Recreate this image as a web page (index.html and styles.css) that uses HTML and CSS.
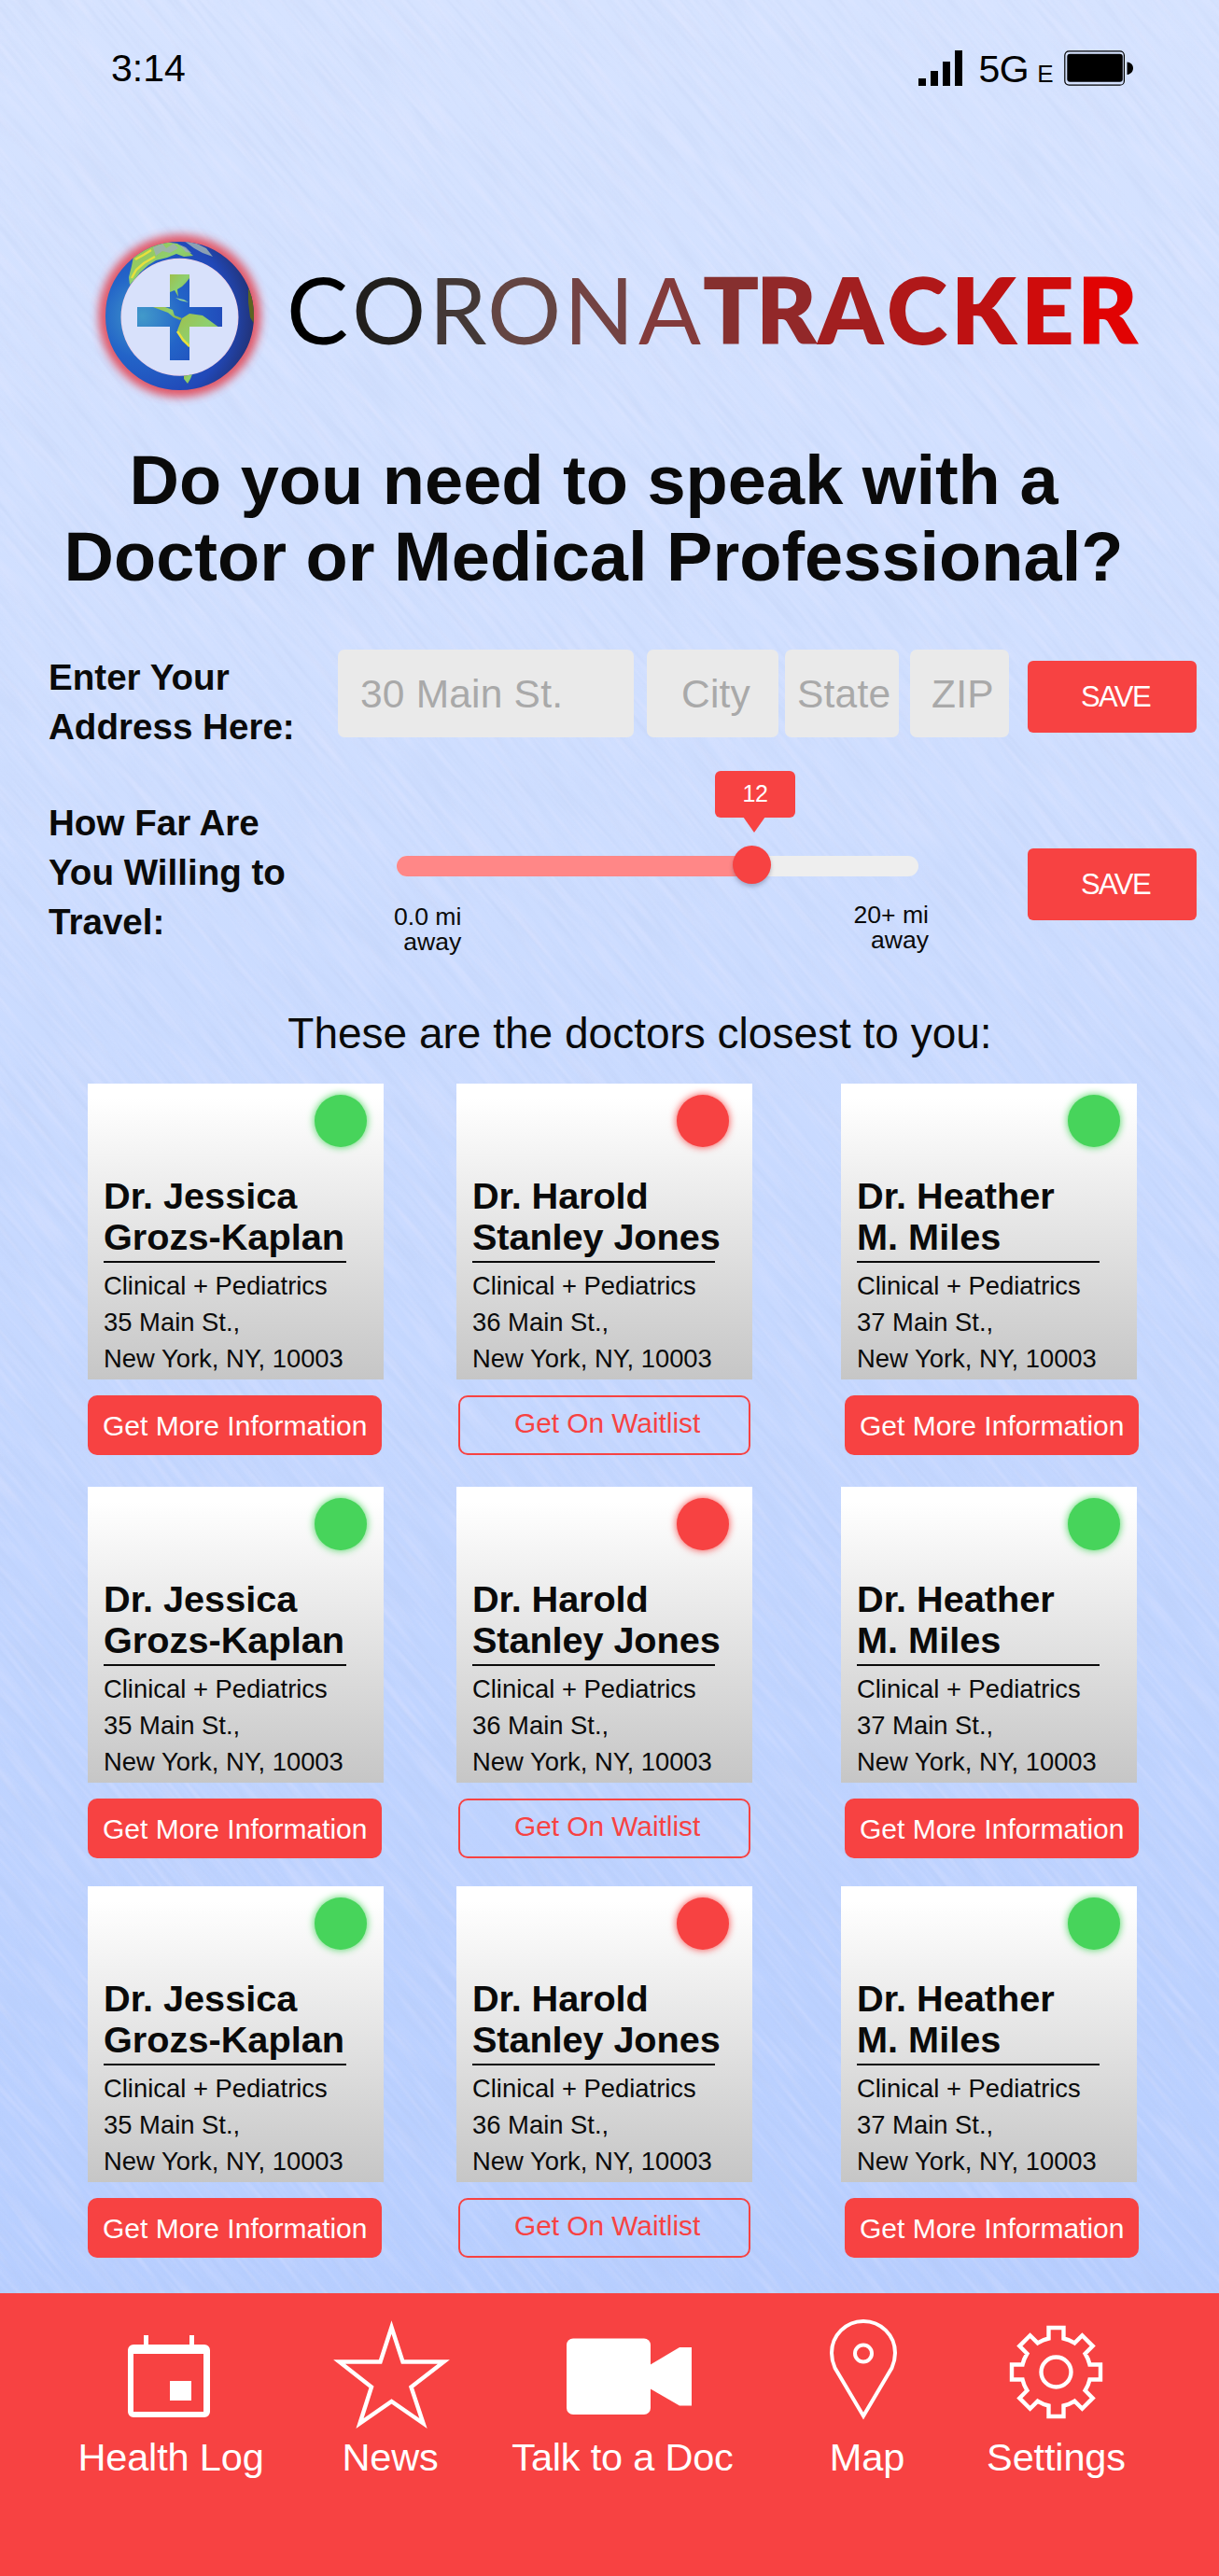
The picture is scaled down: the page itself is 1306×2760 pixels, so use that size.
FILE: index.html
```
<!DOCTYPE html>
<html lang="en">
<head>
<meta charset="utf-8">
<title>CoronaTracker</title>
<link rel="stylesheet" href="styles.css">
</head>
<body>
<svg class="texture" width="1306" height="2460" aria-hidden="true">
  <filter id="grain" x="0" y="0" width="100%" height="100%">
    <feTurbulence type="fractalNoise" baseFrequency="0.011 0.2" numOctaves="2" seed="4"/>
    <feColorMatrix values="0 0 0 0 .42  0 0 0 0 .52  0 0 0 0 .78  1.6 0 0 0 -.7"/>
  </filter>
  <filter id="blush" x="0" y="0" width="100%" height="100%">
    <feTurbulence type="fractalNoise" baseFrequency="0.011 0.16" numOctaves="2" seed="19"/>
    <feColorMatrix values="0 0 0 0 .88  0 0 0 0 .84  0 0 0 0 1  1.8 0 0 0 -.8"/>
  </filter>
  <g transform="rotate(50 653 1230)">
    <rect x="-1000" y="-400" width="3300" height="3300" filter="url(#grain)" opacity=".22"/>
    <rect x="-1000" y="-400" width="3300" height="3300" filter="url(#blush)" opacity=".3"/>
  </g>
</svg>

<header class="status">
  <span class="time">3:14</span>
  <svg class="signal" width="47" height="38" viewBox="0 0 47 38"><path d="M0 30h8v8H0zM13 22h8v16h-8zM26 12h8v26h-8zM39 0h8v38h-8z"/></svg>
  <span class="network">5G<small>E</small></span>
  <svg class="battery" width="74" height="38" viewBox="0 0 74 38"><rect x=".8" y=".8" width="63.6" height="36.4" rx="4.5" fill="none" stroke="#000" stroke-width="1.2"/><rect x="3.3" y="3.8" width="59.5" height="30" rx="3"/><path d="M67.500 12.500C72 13 74 16 74 19s-2 6.500-6.500 7z"/></svg>
</header>

<main>
  <div class="brand">
    <svg class="globe" width="201" height="201" viewBox="0 0 201 201">
      <defs>
        <radialGradient id="sea" cx=".3" cy=".5" r=".75"><stop offset="0" stop-color="#429aca"/><stop offset=".3" stop-color="#2364c8"/><stop offset=".62" stop-color="#2148b8"/><stop offset=".82" stop-color="#22306f"/><stop offset="1" stop-color="#1a2350"/></radialGradient>
        <linearGradient id="land" x1="0" y1="0" x2="1" y2="1"><stop offset="0" stop-color="#9fbf4a"/><stop offset=".5" stop-color="#8ed070"/><stop offset="1" stop-color="#8fa838"/></linearGradient>
        <filter id="soft" x="-20%" y="-20%" width="140%" height="140%"><feGaussianBlur stdDeviation="5"/></filter>
        <clipPath id="mark"><path clip-rule="evenodd" d="M21 100.500a79.500 79.500 0 1 1 159 0a79.500 79.500 0 1 1-159 0zM37.500 101.800a63 63 0 1 0 126 0a63 63 0 1 0-126 0z"/><path d="M90 56h21v35h35v21h-35v36H90v-36H55V91h35z"/></clipPath>
      </defs>
      <circle cx="100.500" cy="100.500" r="78" fill="none" stroke="#e4404e" stroke-width="18" opacity=".85" filter="url(#soft)"/>
      <circle cx="100.500" cy="101.800" r="63.500" fill="#d8e1fb"/>
      <circle cx="100.500" cy="101.800" r="63" fill="none" stroke="#f3c9dc" stroke-width="2" opacity=".7"/>
      <g clip-path="url(#mark)">
        <rect width="201" height="201" fill="url(#sea)"/>
        <g fill="url(#land)">
          <path d="M51 37l9-6 14-7 10-3 14 2 8 5 9 8-10 1-8-3-10 4-12 3-8 5-9 8-5 7-6 6-1-8 3-12z"/>
          <path d="M90 55h21v5l-4 5-4 4-5 3 1 8-4-7-5 2z"/>
          <path d="M72 91l13 0 8 3 2 6 8 3-2 2-7-3-6-5-8-3z"/>
          <path d="M103 103l8-5 14 2 7 5 11 8-3 17-22 10-7-6-8-7-5-11z"/>
          <path d="M105 163h9l-2 5-3 5-4-5z"/>
          <path d="M174 70l7 18v22l-5-8-2-16z" fill="#5c6420"/>
        </g>
        <path d="M53 40l9-5 8-5M49 60l5-9 8-7 12-7M98 117l6 9 7 7" fill="none" stroke="#e8e03c" stroke-width="2.500"/>
        <path d="M105 20l14 3 10 5 7 9-11-4-9-5zM72 27l10-4 4 5 8-5 5 5-9 5-8-2-7 5zM100 24l7 3 6 6-6-1z" fill="#9db0b4" opacity=".85"/>
        <path d="M96 81l9 2 5 3-9-2z" fill="#8fcf9a"/>
      </g>
    </svg>
    <svg class="wordmark" width="930" height="130" viewBox="0 0 930 130">
      <text y="99" x="7 77 159.500 222 304 384"><tspan fill="#000">C</tspan><tspan fill="#211f1d">O</tspan><tspan fill="#433836">R</tspan><tspan fill="#644543">O</tspan><tspan fill="#734343">N</tspan><tspan fill="#833b3b">A</tspan></text>
      <text class="heavy" y="99" x="453 510 576 650 719 794 854"><tspan fill="#86302f">T</tspan><tspan fill="#922829">R</tspan><tspan fill="#a21f20">A</tspan><tspan fill="#b01819">C</tspan><tspan fill="#be1112">K</tspan><tspan fill="#cf0c0c">E</tspan><tspan fill="#e10303">R</tspan></text>
    </svg>
  </div>

  <h1>Do you need to speak with a<br>Doctor or Medical Professional?</h1>

  <form class="row address">
    <label>Enter Your<br>Address Here:</label>
    <input class="street" placeholder="30 Main St.">
    <input class="city" placeholder="City">
    <input class="state" placeholder="State">
    <input class="zip" placeholder="ZIP">
    <button class="save" type="button">SAVE</button>
  </form>

  <form class="row distance">
    <label>How Far Are<br>You Willing to<br>Travel:</label>
    <div class="range">
      <div class="track"><div class="fill"></div><span class="knob"></span><span class="tip">12</span></div>
      <div class="ends"><span>0.0 mi<br>away</span><span>20+ mi<br>away</span></div>
    </div>
    <button class="save" type="button">SAVE</button>
  </form>

  <h2>These are the doctors closest to you:</h2>

  <section class="doctors">
    <article><div class="card"><i class="dot"></i><h3>Dr. Jessica<br>Grozs-Kaplan</h3><p>Clinical + Pediatrics<br>35 Main St.,<br>New York, NY, 10003</p></div><button>Get More Information</button></article>
    <article class="busy"><div class="card"><i class="dot"></i><h3>Dr. Harold<br>Stanley Jones</h3><p>Clinical + Pediatrics<br>36 Main St.,<br>New York, NY, 10003</p></div><button>Get On Waitlist</button></article>
    <article class="last"><div class="card"><i class="dot"></i><h3>Dr. Heather<br>M. Miles</h3><p>Clinical + Pediatrics<br>37 Main St.,<br>New York, NY, 10003</p></div><button>Get More Information</button></article>
    <article><div class="card"><i class="dot"></i><h3>Dr. Jessica<br>Grozs-Kaplan</h3><p>Clinical + Pediatrics<br>35 Main St.,<br>New York, NY, 10003</p></div><button>Get More Information</button></article>
    <article class="busy"><div class="card"><i class="dot"></i><h3>Dr. Harold<br>Stanley Jones</h3><p>Clinical + Pediatrics<br>36 Main St.,<br>New York, NY, 10003</p></div><button>Get On Waitlist</button></article>
    <article class="last"><div class="card"><i class="dot"></i><h3>Dr. Heather<br>M. Miles</h3><p>Clinical + Pediatrics<br>37 Main St.,<br>New York, NY, 10003</p></div><button>Get More Information</button></article>
    <article><div class="card"><i class="dot"></i><h3>Dr. Jessica<br>Grozs-Kaplan</h3><p>Clinical + Pediatrics<br>35 Main St.,<br>New York, NY, 10003</p></div><button>Get More Information</button></article>
    <article class="busy"><div class="card"><i class="dot"></i><h3>Dr. Harold<br>Stanley Jones</h3><p>Clinical + Pediatrics<br>36 Main St.,<br>New York, NY, 10003</p></div><button>Get On Waitlist</button></article>
    <article class="last"><div class="card"><i class="dot"></i><h3>Dr. Heather<br>M. Miles</h3><p>Clinical + Pediatrics<br>37 Main St.,<br>New York, NY, 10003</p></div><button>Get More Information</button></article>
  </section>
</main>

<nav>
  <a><svg viewBox="0 0 140 118"><path fill="#fff" fill-rule="evenodd" d="M30 27h76a6 6 0 0 1 6 6v66a6 6 0 0 1-6 6H30a6 6 0 0 1-6-6V33a6 6 0 0 1 6-6zM30 37v62h75V37zM41 17h5v10h-5zM90 17h5v10h-5zM69 66h23v21H69z"/></svg><span>Health Log</span></a>
  <a><svg viewBox="0 0 140 118"><path class="line" stroke-miterlimit="10" d="M71.500 8.500L83.500 45.500H127.500l-35 27L105.500 111.500 71.500 88 37.500 111.500l12.500-39-34.500-27H59.500z"/></svg><span>News</span></a>
  <a class="talk"><svg viewBox="0 0 140 118"><rect x="10" y="20.500" width="90" height="81.500" rx="7" fill="#fff"/><path fill="#fff" d="M99 49l32-19h13v62.500H131L99 74z"/></svg><span>Talk to a Doc</span></a>
  <a class="map"><svg viewBox="0 0 140 118"><path class="line thin" stroke-miterlimit="10" d="M66 103.500L35.500 52Q32 44 32 36A34 34 0 0 1 100 36Q100 44 96.500 52z"/><circle class="line thin" cx="66" cy="36.500" r="9"/></svg><span>Map</span></a>
  <a><svg viewBox="-69.500 -56.500 140 118"><path class="line" d="M-8-36V-47.500H8V-36A37 37 0 0 1 19.800-31.100L27.900-39.200 39.200-27.900 31.100-19.800A37 37 0 0 1 36-8H47.500V8H36A37 37 0 0 1 31.100 19.800L39.200 27.900 27.900 39.200 19.800 31.100A37 37 0 0 1 8 36V47.500H-8V36A37 37 0 0 1-19.800 31.100L-27.900 39.200-39.200 27.900-31.100 19.800A37 37 0 0 1-36 8H-47.500V-8H-36A37 37 0 0 1-31.100-19.800L-39.200-27.900-27.900-39.200-19.800-31.100A37 37 0 0 1-8-36z"/><circle class="line" r="16"/></svg><span>Settings</span></a>
</nav>
</body>
</html>
```
FILE: styles.css
```
* { box-sizing: border-box; }

body {
  margin: 0;
  position: relative;
  width: 1306px;
  height: 2760px;
  overflow: hidden;
  display: flex;
  flex-direction: column;
  font-family: "Liberation Sans", Arial, sans-serif;
  color: #0a0a0a;
  background: linear-gradient(#d6e3ff 0, #d0dfff 700px, #b7ceff 2457px);
}

.texture { position: absolute; top: 0; left: 0; z-index: -1; }

.status {
  height: 145px;
  padding: 0 92px 0 119px;
  display: flex;
  align-items: center;
  font-size: 41px;
  color: #000;
}
.time { margin-top: 2px; }
.signal { margin-left: auto; }
.network { margin: 4px 12px 0 17px; letter-spacing: -.5px; }
.network small { font-size: 26px; margin-left: 9px; }

.brand {
  height: 328px;
  padding: 93px 0 0 92px;
  display: flex;
  align-items: flex-start;
}
.wordmark {
  margin: 32px 0 0 7px;
  font-family: Lato, sans-serif;
  font-size: 99px;
}
.heavy { font-weight: 800; }

h1, h2, h3, p { margin: 0; }

h1 {
  width: 1272px;
  padding-top: 1px;
  font-size: 74px;
  line-height: 82px;
  text-align: center;
}

.row { display: flex; align-items: flex-start; padding-left: 52px; }
.row label {
  width: 310px;
  font-size: 38.6px;
  font-weight: bold;
  line-height: 52.8px;
}
.address { margin-top: 58px; height: 130px; }
.address label { padding-top: 4px; }

input {
  height: 94px;
  padding: 1px 0 0;
  border: 0;
  border-radius: 7px;
  background: #eaeaea;
  font: 42.5px "Liberation Sans", Arial, sans-serif;
  letter-spacing: .2px;
}
input::placeholder { color: #a9a9a9; opacity: 1; }
.street { width: 317px; padding-left: 24px; margin-right: 14px; }
.city { width: 141px; padding-left: 37px; margin-right: 7px; }
.state { width: 122px; padding-left: 13px; margin-right: 12px; }
.zip { width: 106px; padding-left: 23px; margin-right: 20px; }

button {
  border: 0;
  border-radius: 10px;
  background: #f74242;
  color: #fff;
  font-family: inherit;
  text-align: left;
}
.save {
  width: 181px;
  height: 77px;
  margin-top: 12px;
  padding: 0 0 0 57px;
  border-radius: 6px;
  font-size: 31px;
  letter-spacing: -1.6px;
}

.distance { height: 255px; }
.distance label { padding-top: 30px; }
.distance .save { margin-top: 83px; }
.range { width: 573px; margin: 91px 105px 0 61px; }
.track {
  position: relative;
  width: 559px;
  height: 22px;
  margin-left: 2px;
  border-radius: 11px;
  background: #eee;
}
.fill { width: 380px; height: 22px; border-radius: 11px; background: #ff8787; }
.knob {
  position: absolute;
  left: 360px;
  top: -11px;
  width: 41px;
  height: 41px;
  border-radius: 50%;
  background: #f74242;
  box-shadow: 0 3px 4px rgba(60, 60, 90, .3);
}
.tip {
  position: absolute;
  left: 341px;
  top: -91px;
  width: 86px;
  height: 50px;
  border-radius: 6px;
  background: #f74242;
  color: #fff;
  font-size: 25px;
  line-height: 48px;
  letter-spacing: -.5px;
  text-align: center;
}
.tip::after {
  content: "";
  position: absolute;
  left: 30px;
  top: 49px;
  border: solid transparent;
  border-width: 17px 12px 0;
  border-top-color: #f74242;
}
.ends {
  display: flex;
  justify-content: space-between;
  margin: 30px 1px 0 -1px;
  font-size: 26.6px;
  line-height: 27px;
  text-align: right;
}
.ends span:last-child { margin-top: -2px; }

h2 {
  width: 1371px;
  font-size: 46px;
  font-weight: normal;
  line-height: 52px;
  text-align: center;
}

.doctors {
  margin: 28px 0 0 94px;
  display: grid;
  grid-template-columns: 395px 412px 319px;
  grid-template-rows: 432px 428px 436px;
}
.card {
  position: relative;
  width: 317px;
  height: 317px;
  margin-bottom: 17px;
  padding: 98px 0 0 17px;
  background: linear-gradient(#fff 5%, #c6c6c6);
}
.dot {
  position: absolute;
  top: 12px;
  right: 18px;
  width: 56px;
  height: 56px;
  border-radius: 50%;
  background: #47d45b;
  box-shadow: 0 0 9px #47d45b;
}
h3 { font-size: 39.7px; line-height: 44px; white-space: nowrap; }
h3::after {
  content: "";
  display: block;
  width: 260px;
  height: 2px;
  margin-top: 4px;
  background: #0a0a0a;
}
.card p { margin-top: 5px; font-size: 27.4px; line-height: 39px; }

article button {
  display: block;
  width: 315px;
  height: 64px;
  padding: 1px 0 0 16px;
  font-size: 30px;
  white-space: nowrap;
}
.busy .dot { right: 25px; background: #f74242; box-shadow: 0 0 9px #f74242; }
.busy h3 { letter-spacing: -.1px; }
.busy button {
  width: 313px;
  margin-left: 2px;
  padding: 0 0 4px 58px;
  border: 2px solid #f74242;
  background: none;
  color: #f74242;
  font-size: 29.8px;
}
.last button { margin-left: 4px; }

nav {
  flex: 1;
  display: grid;
  grid-template-columns: 230px 240px 258px 256px 159px;
  padding: 28px 0 0 68px;
  background: #f74242;
  color: #fff;
  font-size: 41.5px;
  line-height: 46px;
}
nav a { display: flex; flex-direction: column; align-items: center; gap: 7px; }
nav span { white-space: nowrap; letter-spacing: -.15px; }
nav svg { width: 140px; height: 118px; overflow: visible; }
.talk span { letter-spacing: -.2px; }
.map { padding-left: 10px; }
.line { fill: none; stroke: #fff; stroke-width: 4.4px; }
.thin { stroke-width: 4px; }
```
